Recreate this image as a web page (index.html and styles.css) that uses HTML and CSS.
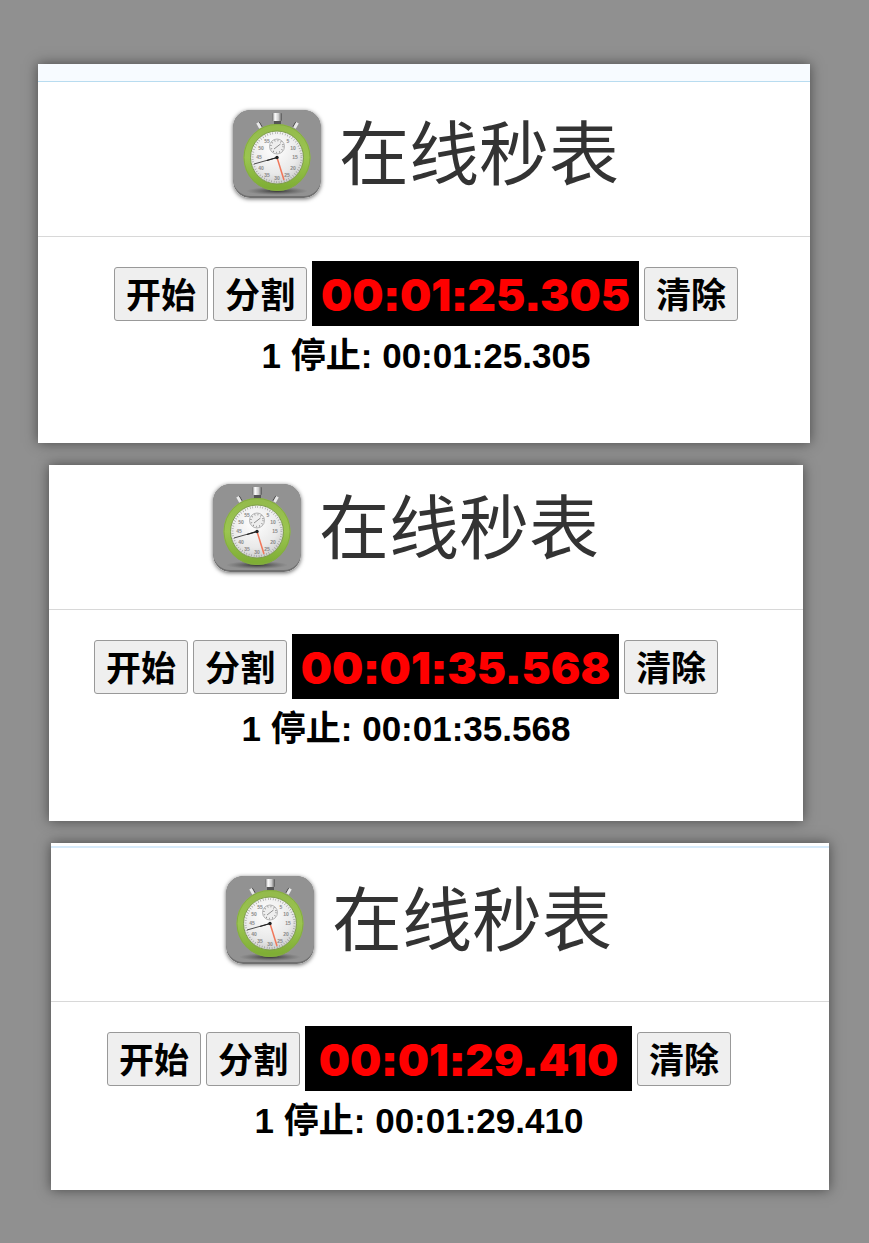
FILE: index.html
```html
<!DOCTYPE html>
<html lang="zh-CN">
<head>
  <meta charset="UTF-8">
  <meta name="viewport" content="width=device-width, initial-scale=1">
  <title>在线秒表</title>
  <link rel="stylesheet" href="styles.css">
</head>
<body>

  <main class="sheet">

    <section class="card card-first">
      <div class="strip"></div>
      <header class="head">
        <svg class="logo" viewBox="0 0 88 88" aria-hidden="true">
          <defs>
            <radialGradient id="face" cx="45%" cy="35%" r="70%">
              <stop offset="0" stop-color="#ffffff"/>
              <stop offset="0.6" stop-color="#e9e9e9"/>
              <stop offset="1" stop-color="#bdbdbd"/>
            </radialGradient>
            <linearGradient id="ring" x1="0" y1="0" x2="0" y2="1">
              <stop offset="0" stop-color="#94bb4c"/>
              <stop offset="0.5" stop-color="#9bc550"/>
              <stop offset="1" stop-color="#7fae35"/>
            </linearGradient>
            <linearGradient id="metal" x1="0" y1="0" x2="1" y2="0">
              <stop offset="0" stop-color="#666"/>
              <stop offset="0.3" stop-color="#fff"/>
              <stop offset="0.65" stop-color="#ccc"/>
              <stop offset="1" stop-color="#555"/>
            </linearGradient>
            <radialGradient id="ground">
              <stop offset="0" stop-color="#333"/>
              <stop offset="1" stop-color="#555" stop-opacity="0"/>
            </radialGradient>
          </defs>
          <g id="stopwatch">
            <rect width="88" height="88" rx="17" fill="#707070"/>
            <rect width="88" height="86" rx="17" fill="#929292"/>
            <ellipse cx="44" cy="81" rx="31" ry="4" fill="url(#ground)"/>
            <!-- crown and side buttons -->
            <rect x="41" y="10" width="7" height="6" fill="#555"/>
            <rect x="39" y="3" width="10" height="8" rx="1" fill="url(#metal)"/>
            <g transform="rotate(-30 27 16)">
              <rect x="25" y="12" width="4" height="6" fill="#e8e8e8"/>
              <rect x="28" y="12" width="1" height="6" fill="#444"/>
            </g>
            <g transform="rotate(30 62 16)">
              <rect x="60" y="12" width="4" height="6" fill="#e8e8e8"/>
              <rect x="60" y="12" width="1" height="6" fill="#444"/>
            </g>
            <circle cx="44" cy="47.5" r="30" fill="url(#face)" stroke="url(#ring)" stroke-width="7"/>
            <circle cx="44" cy="47.5" r="33" fill="none" stroke="#84ac42" stroke-width="1"/>
            <circle cx="44" cy="47.5" r="26.5" fill="none" stroke="#7d9c4a" stroke-width="1"/>
            <circle cx="44" cy="47.5" r="24.5" fill="none" stroke="#888" stroke-width="2" stroke-dasharray="0.5 2.06"/>
            <!-- small dial -->
            <circle cx="44" cy="36.5" r="7.5" fill="#eee" stroke="#999" stroke-width="0.7"/>
            <circle cx="44" cy="36.5" r="6" fill="none" stroke="#777" stroke-width="1.6" stroke-dasharray="0.6 2.54"/>
            <path d="M41 39l6.5-5" stroke="#777" stroke-width="0.8"/>
            <g class="dial-numbers">
              <text x="55" y="33">5</text>
              <text x="60" y="40">10</text>
              <text x="62" y="49">15</text>
              <text x="60" y="60">20</text>
              <text x="54" y="67">25</text>
              <text x="44" y="70">30</text>
              <text x="34" y="67">35</text>
              <text x="28" y="60">40</text>
              <text x="26" y="49">45</text>
              <text x="28" y="40">50</text>
              <text x="34" y="33">55</text>
            </g>
            <path d="M44 47.5L21 54" stroke="#222" stroke-width="0.8"/>
            <path d="M44 47.5L34 50.5" stroke="#222" stroke-width="1.3"/>
            <path d="M44 47.5L51 70" stroke="#f0775a" stroke-width="1.5"/>
            <circle cx="44" cy="47.5" r="1.7" fill="#222"/>
          </g>
        </svg>
        <h1>在线秒表</h1>
      </header>
      <div class="watch">
        <div class="controls">
          <button type="button">开始</button>
          <button type="button">分割</button>
          <output class="display">00:01:25.305</output>
          <button type="button">清除</button>
        </div>
        <p class="lap">1 停止: 00:01:25.305</p>
      </div>
    </section>

    <section class="card card-second">
      <header class="head">
        <svg class="logo" viewBox="0 0 88 88" aria-hidden="true"><use href="#stopwatch"/></svg>
        <h1>在线秒表</h1>
      </header>
      <div class="watch">
        <div class="controls">
          <button type="button">开始</button>
          <button type="button">分割</button>
          <output class="display">00:01:35.568</output>
          <button type="button">清除</button>
        </div>
        <p class="lap">1 停止: 00:01:35.568</p>
      </div>
    </section>

    <section class="card card-third">
      <div class="strip"></div>
      <header class="head">
        <svg class="logo" viewBox="0 0 88 88" aria-hidden="true"><use href="#stopwatch"/></svg>
        <h1>在线秒表</h1>
      </header>
      <div class="watch">
        <div class="controls">
          <button type="button">开始</button>
          <button type="button">分割</button>
          <output class="display">00:01:29.410</output>
          <button type="button">清除</button>
        </div>
        <p class="lap">1 停止: 00:01:29.410</p>
      </div>
    </section>

  </main>

</body>
</html>
```
FILE: styles.css
```css
* {
  box-sizing: border-box;
}

body {
  margin: 0;
  min-height: 100vh;
  background: #909090;
  color: #000;
  font-family: "Liberation Sans", "Noto Sans CJK SC", sans-serif;
}

.sheet {
  display: flex;
  flex-direction: column;
  gap: 22px;
  padding: 64px 40px 53px 38px;
}

.card {
  background: #fff;
  box-shadow: 0 0 12px rgba(0, 0, 0, 0.5);
}

.card-first {
  margin-right: 19px;
}

.card-second {
  margin-left: 11px;
  margin-right: 26px;
}

.card-third {
  margin-left: 13px;
}

.strip {
  height: 18px;
  background: #f7fbff;
  border-bottom: 1px solid #b8dcf0;
}

.card-third .strip {
  height: 5px;
  background: #fff;
  border-bottom: 2px solid #d6eafa;
}

.head {
  display: flex;
  justify-content: center;
  gap: 18px;
  padding: 28px 0 37px;
  border-bottom: 1px solid #d8d8d8;
}

.logo {
  flex: none;
  width: 88px;
  height: 88px;
  border-radius: 17px;
  box-shadow: 0 1px 4px rgba(0, 0, 0, 0.6);
}

.dial-numbers {
  font-size: 5px;
  font-weight: bold;
  text-anchor: middle;
  fill: #888;
}

h1 {
  margin: 0;
  color: #333;
  font-family: "Noto Sans CJK SC", sans-serif;
  font-size: 70px;
  font-weight: 400;
  line-height: 80px;
  white-space: nowrap;
}

.watch {
  padding: 24px 0 66px;
}

.controls {
  display: flex;
  justify-content: center;
  align-items: center;
  gap: 5px;
}

button {
  height: 54px;
  padding: 4px 11px 0;
  background: #efefef;
  border: 1px solid #999;
  border-radius: 3px;
  color: #000;
  font-family: inherit;
  font-size: 35px;
  font-weight: bold;
  line-height: 48px;
  white-space: nowrap;
}

.display {
  min-width: 327px;
  padding-top: 4px;
  background: #000;
  color: #f00;
  font-family: "Arial Black", Inter, sans-serif;
  font-size: 44px;
  font-weight: 900;
  font-feature-settings: "calt" 0, "ss07" 1;
  line-height: 61px;
  text-align: center;
}

.lap {
  margin: 9px 0 0;
  font-size: 35px;
  font-weight: bold;
  line-height: 42px;
  text-align: center;
}

.card-first .head,
.card-first .watch {
  padding-left: 4px;
}

.card-first .head {
  padding-bottom: 38px;
}

.card-second .head {
  padding-top: 19px;
  padding-right: 40px;
}

.card-second .watch {
  padding-right: 40px;
  padding-bottom: 71px;
}

.card-third .head {
  padding-right: 42px;
}

.card-third .watch {
  padding-right: 42px;
  padding-bottom: 48px;
}
```
